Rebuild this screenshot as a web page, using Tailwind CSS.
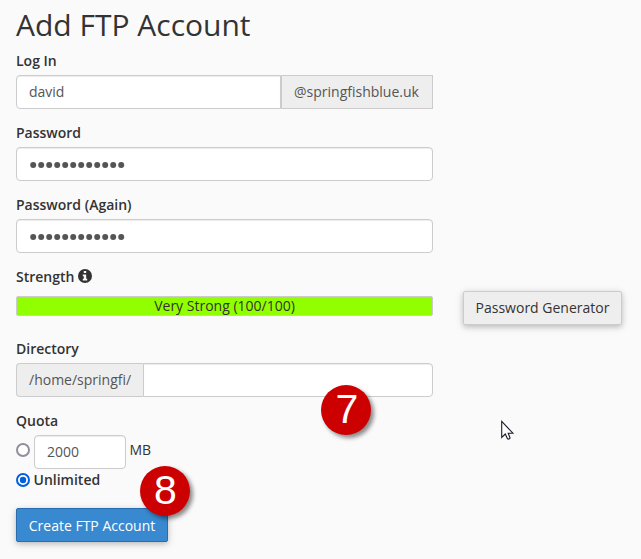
<!DOCTYPE html>
<html lang="en">
<head>
<meta charset="utf-8">
<title>Add FTP Account</title>
<script src="https://cdn.jsdelivr.net/npm/@tailwindcss/browser@4"></script>
</head>
<body class="relative h-[559px] w-[641px] overflow-hidden bg-[#fafafa] font-['Open_Sans','Noto_Sans',sans-serif] text-[14px] leading-5 text-[#333]">
<main class="flex flex-col pl-4 pt-2">
  <h1 class="mb-[10px] text-[30px] leading-[33px]">Add FTP Account</h1>
  <form class="flex flex-col gap-[14px]">
    <section class="flex flex-col gap-1">
      <label class="font-semibold">Log In</label>
      <div class="flex h-[34px] w-[417px]">
        <div class="w-[265px] rounded-l border border-[#ccc] bg-white px-3 py-1.5 text-[#555] shadow-[inset_0_1px_1px_rgba(0,0,0,0.075)]">david</div>
        <div class="flex-1 whitespace-nowrap border border-[#ccc] bg-[#eee] px-3 py-1.5 text-[#555]">@springfishblue.uk</div>
      </div>
    </section>
    <section class="flex flex-col gap-1">
      <label class="font-semibold">Password</label>
      <div class="flex h-[34px] w-[417px] items-center rounded border border-[#ccc] bg-white px-[13px] shadow-[inset_0_1px_1px_rgba(0,0,0,0.075)]">
        <svg class="mt-[2px]" width="96" height="6" viewBox="0 0 96 6" fill="#555"><g id="dots"><circle cx="3.2" cy="3" r="3"/><circle cx="11.2" cy="3" r="3"/><circle cx="19.2" cy="3" r="3"/><circle cx="27.2" cy="3" r="3"/><circle cx="35.2" cy="3" r="3"/><circle cx="43.2" cy="3" r="3"/><circle cx="51.2" cy="3" r="3"/><circle cx="59.2" cy="3" r="3"/><circle cx="67.2" cy="3" r="3"/><circle cx="75.2" cy="3" r="3"/><circle cx="83.2" cy="3" r="3"/><circle cx="91.2" cy="3" r="3"/></g></svg>
      </div>
    </section>
    <section class="flex flex-col gap-1">
      <label class="font-semibold">Password (Again)</label>
      <div class="flex h-[34px] w-[417px] items-center rounded border border-[#ccc] bg-white px-[13px] shadow-[inset_0_1px_1px_rgba(0,0,0,0.075)]">
        <svg class="mt-[2px]" width="96" height="6" viewBox="0 0 96 6" fill="#555"><use href="#dots"/></svg>
      </div>
    </section>
    <section class="flex h-[58px] gap-[30px]">
      <div class="w-[417px]">
        <div class="flex items-center gap-1 font-semibold">Strength
          <svg class="-mt-[2px]" width="14" height="14" viewBox="0 0 14 14"><circle cx="7" cy="7" r="7" fill="#333"/><path fill="#fafafa" d="M5.800 2.100h2.400v2H5.800zM4.800 5.600h3.400v4.200h1v1.700H4.800V9.800h1V7.300h-1z"/></svg>
        </div>
        <div class="mt-[9px] h-5 rounded-[2px] border border-[#ccc] bg-[#91ff00] text-center leading-[18px]">Very Strong (100/100)</div>
      </div>
      <button type="button" class="mt-6 h-[34px] w-[159px] whitespace-nowrap rounded-[2px] border border-[#ccc] bg-[#eee] shadow-[0_2px_5px_rgba(0,0,0,0.16),0_2px_10px_rgba(0,0,0,0.12)]">Password Generator</button>
    </section>
    <section class="flex flex-col gap-1">
      <label class="font-semibold">Directory</label>
      <div class="flex h-[34px] w-[417px]">
        <div class="w-[127px] rounded-l border border-r-0 border-[#ccc] bg-[#eee] px-3 py-1.5 text-[#555]">/home/springfi/</div>
        <div class="flex-1 rounded-r border border-[#ccc] bg-white shadow-[inset_0_1px_1px_rgba(0,0,0,0.075)]"></div>
      </div>
    </section>
    <section>
      <div class="mb-1 font-semibold">Quota</div>
      <div class="flex h-[34px]">
        <svg class="mt-2" width="14" height="14" viewBox="0 0 14 14"><circle cx="7" cy="7" r="6" fill="#fff" stroke="#8f8f9d" stroke-width="2"/></svg>
        <div class="ml-1 w-[92px] rounded border border-[#ccc] bg-white px-3 py-1.5 text-[#555] shadow-[inset_0_1px_1px_rgba(0,0,0,0.075)]">2000</div>
        <span class="ml-[3.500px] mt-[5px]">MB</span>
      </div>
      <div class="mt-px flex h-5 items-center gap-1 font-semibold">
        <svg width="14" height="14" viewBox="0 0 14 14"><circle cx="7" cy="7" r="6" fill="#fff" stroke="#0060df" stroke-width="2"/><circle cx="7" cy="7" r="3.200" fill="#0060df"/></svg>
        <span class="-ml-[0.500px]">Unlimited</span>
      </div>
      <button type="button" class="mt-[18px] h-[34px] w-[152px] whitespace-nowrap rounded-[2px] border border-[#2a6daf] bg-[#3889d0] pt-px text-white shadow-[0_2px_5px_rgba(0,0,0,0.16),0_2px_10px_rgba(0,0,0,0.12)]">Create FTP Account</button>
    </section>
  </form>
</main>
<div class="absolute left-[321px] top-[385px] flex size-[50px] items-center justify-center rounded-full bg-[#c00] pb-[2px] pl-[2px] font-['Liberation_Sans',Arial,sans-serif] text-[41px] leading-none text-white shadow-[3px_3px_4px_rgba(0,0,0,0.45)]">7</div>
<div class="absolute left-[140px] top-[466px] flex size-[50px] items-center justify-center rounded-full bg-[#c00] pb-px pl-px font-['Liberation_Sans',Arial,sans-serif] text-[41px] leading-none text-white shadow-[3px_3px_4px_rgba(0,0,0,0.45)]">8</div>
<svg class="absolute left-[501px] top-[420px]" width="14" height="21" viewBox="0 0 14 21"><path d="M.7 1.400v16l3.600-3.400 2.200 4.800q1.600.9 2.600-.8L7.200 13.200h4.700z" fill="#fff" stroke="#1c1c2a" stroke-width="1.100"/></svg>
</body>
</html>
